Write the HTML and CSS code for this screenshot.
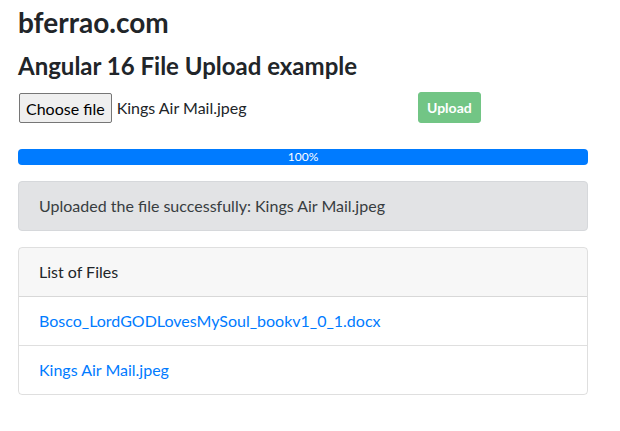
FILE: index.html
```html
<!DOCTYPE html>
<html lang="en">
<head>
<meta charset="utf-8">
<title>bferrao.com</title>
<link rel="stylesheet" href="styles.css">
</head>
<body>
<div class="page">
  <h3 class="site-title">bferrao.com</h3>
  <h4 class="page-title">Angular 16 File Upload example</h4>

  <div class="upload-row">
    <div class="file-field">
      <button class="choose-btn" type="button">Choose file</button>
      <span class="file-name">Kings Air Mail.jpeg</span>
    </div>
    <button class="upload-btn" type="button" disabled>Upload</button>
  </div>

  <div class="progress">
    <div class="progress-bar" style="width:100%">100%</div>
  </div>

  <div class="alert">Uploaded the file successfully: Kings Air Mail.jpeg</div>

  <div class="card">
    <div class="card-header">List of Files</div>
    <ul class="file-list">
      <li class="file-item"><a href="#">Bosco_LordGODLovesMySoul_bookv1_0_1.docx</a></li>
      <li class="file-item"><a href="#">Kings Air Mail.jpeg</a></li>
    </ul>
  </div>
</div>
</body>
</html>
```
FILE: styles.css
```css
* { box-sizing: border-box; }

body {
  margin: 0;
  background: #fff;
  color: #212529;
  font-family: "Lato", "Liberation Sans", sans-serif;
  font-size: 16px;
  line-height: 1.5;
}

.page {
  width: 570px;
  margin-left: 18px;
  padding-top: 6px;
}

.site-title {
  margin: 0 0 12px;
  font-size: 28px;
  font-weight: 700;
  line-height: 1.2;
}

.page-title {
  margin: 0 0 12px;
  font-size: 24px;
  font-weight: 700;
  line-height: 1.2;
}

.upload-row {
  display: flex;
  align-items: flex-start;
}

.file-field {
  width: 400px;
  display: flex;
  align-items: center;
  padding-top: 1px;
}

.choose-btn {
  height: 30px;
  padding: 0 6px;
  margin: 0 5px 0 1px;
  background: #efefef;
  border: 1px solid #767676;
  border-radius: 2px;
  color: #000;
  font-family: inherit;
  font-size: 16px;
}

.file-name {
  font-size: 16px;
  color: #212529;
}

.upload-btn {
  height: 31px;
  padding: 0 8px;
  border: 1px solid #28a745;
  border-radius: 3px;
  background: #28a745;
  color: #fff;
  opacity: .65;
  font-family: inherit;
  font-size: 14px;
  font-weight: 700;
}

.progress {
  display: flex;
  height: 16px;
  margin-top: 26px;
  border-radius: 4px;
  background: #e9ecef;
  overflow: hidden;
}

.progress-bar {
  display: flex;
  justify-content: center;
  align-items: center;
  background: #007bff;
  color: #fff;
  font-size: 12px;
  font-weight: 400;
}

.alert {
  margin-top: 16px;
  padding: 12px 20px;
  border: 1px solid #d6d8db;
  border-radius: 4px;
  background: #e2e3e5;
  color: #383d41;
}

.card {
  margin-top: 16px;
  border: 1px solid rgba(0,0,0,.125);
  border-radius: 4px;
  overflow: hidden;
}

.card-header {
  padding: 12px 20px;
  background: rgba(0,0,0,.03);
  border-bottom: 1px solid rgba(0,0,0,.125);
}

.file-list {
  list-style: none;
  margin: 0;
  padding: 0;
}

.file-item {
  padding: 12px 20px;
  border-bottom: 1px solid rgba(0,0,0,.125);
}

.file-item:last-child { border-bottom: 0; }

.file-item a {
  color: #007bff;
  text-decoration: none;
}
```
